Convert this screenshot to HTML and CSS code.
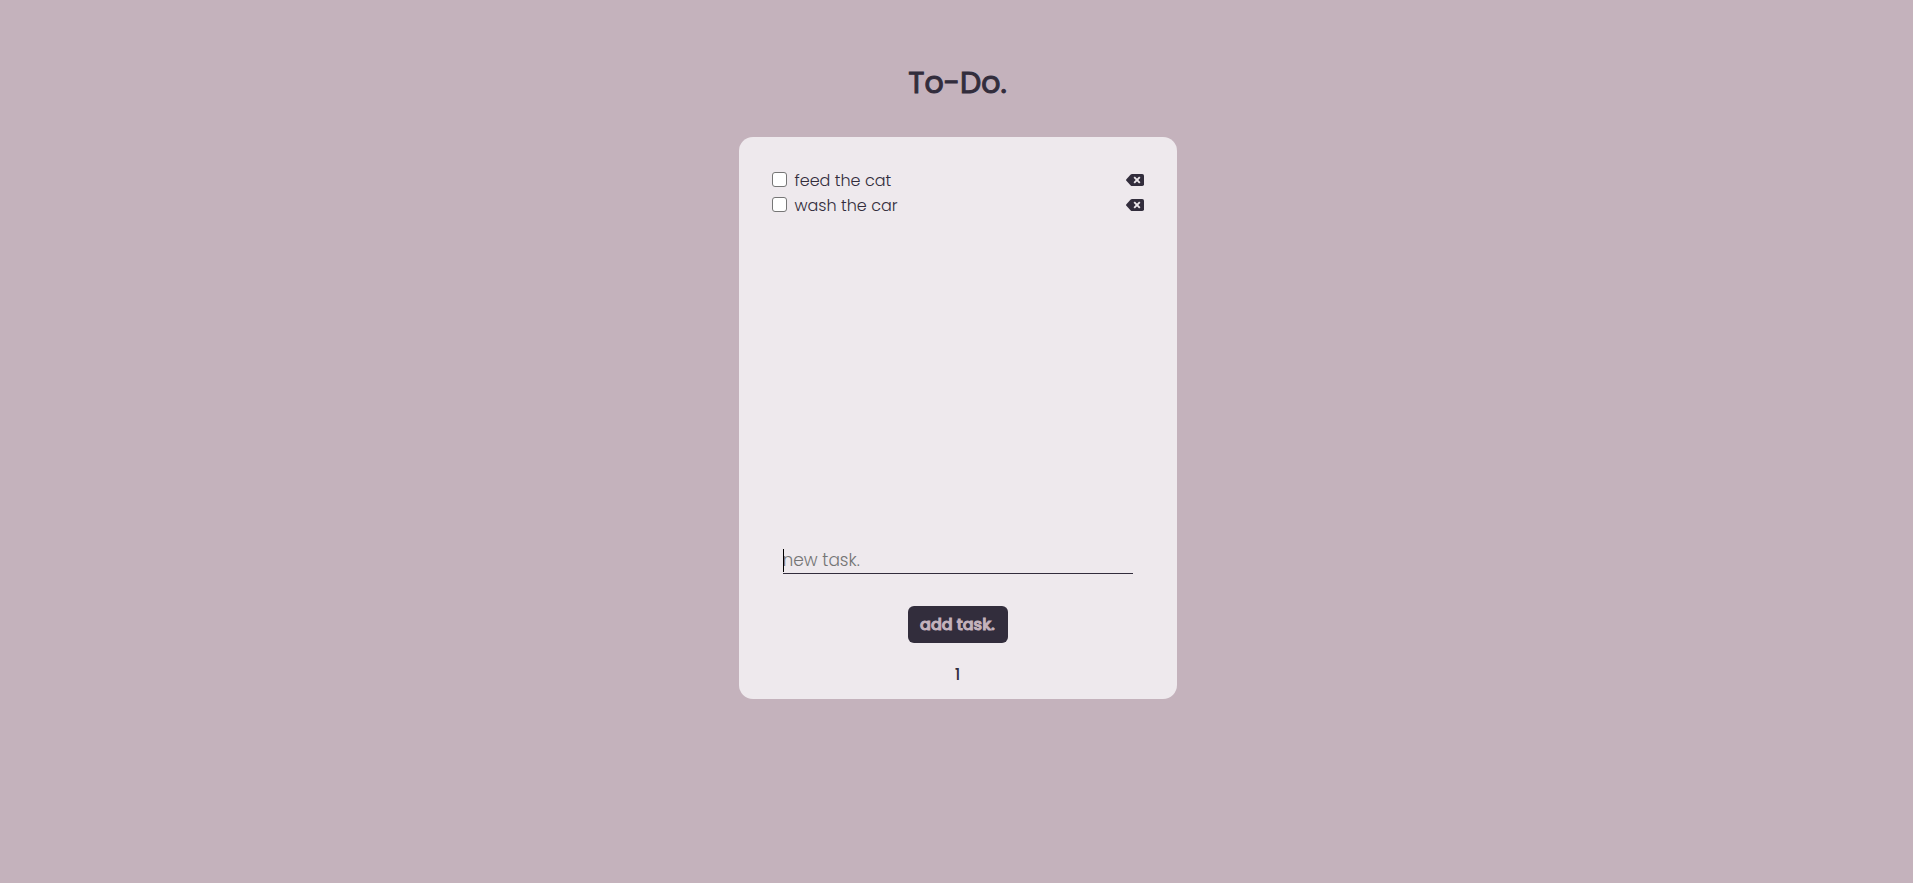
FILE: index.html
```
<!DOCTYPE html>
<html lang="en">
<head>
<meta charset="utf-8">
<meta name="viewport" content="width=device-width, initial-scale=1">
<title>To-Do.</title>
<link rel="stylesheet" href="styles.css">
</head>
<body>
<main class="page">
  <h1 class="title">To-Do.</h1>
  <section class="card">
    <ul class="tasks">
      <li class="task">
        <input class="check" type="checkbox" id="task-1">
        <label class="name" for="task-1">feed the cat</label>
        <button class="remove" type="button" aria-label="Delete feed the cat">
          <svg viewBox="0 0 18 12" width="18" height="12" aria-hidden="true"><path fill="currentColor" d="M6 0H16.200Q18 0 18 1.800V10.200Q18 12 16.200 12H6Q5.300 12 4.700 11.400L.4 6.800Q-.3 6 .4 5.200L4.700.6Q5.300 0 6 0Z"/><path stroke="#eee9ed" stroke-width="1.900" d="M8.200 3.200L13.800 8.800M13.800 3.200L8.200 8.800"/></svg>
        </button>
      </li>
      <li class="task">
        <input class="check" type="checkbox" id="task-2">
        <label class="name" for="task-2">wash the car</label>
        <button class="remove" type="button" aria-label="Delete wash the car">
          <svg viewBox="0 0 18 12" width="18" height="12" aria-hidden="true"><path fill="currentColor" d="M6 0H16.200Q18 0 18 1.800V10.200Q18 12 16.200 12H6Q5.300 12 4.700 11.400L.4 6.800Q-.3 6 .4 5.200L4.700.6Q5.300 0 6 0Z"/><path stroke="#eee9ed" stroke-width="1.900" d="M8.200 3.200L13.800 8.800M13.800 3.200L8.200 8.800"/></svg>
        </button>
      </li>
    </ul>
    <form class="new-task">
      <div class="field">
        <input class="entry" type="text" placeholder="new task." aria-label="New task">
      </div>
      <button class="add" type="button">add task.</button>
    </form>
    <p class="count">1</p>
  </section>
</main>
</body>
</html>
```
FILE: styles.css
```
* {
  box-sizing: border-box;
}

body {
  margin: 0;
  min-height: 100vh;
  background: #c4b2bc;
  color: #322d3c;
  font-family: Poppins, Inter, "Liberation Sans", sans-serif;
  font-size: 16px;
  font-weight: 300;
  line-height: 25px;
}

.page {
  display: flex;
  flex-direction: column;
  align-items: center;
  gap: 32px;
  padding: 60px 16px 32px 18px;
}

.title {
  margin: 0;
  font-size: 30px;
  font-weight: 400;
  line-height: 45px;
  -webkit-text-stroke: 1px currentColor;
}

.card {
  display: flex;
  flex-direction: column;
  align-items: center;
  width: 100%;
  max-width: 438px;
  padding: 30px 33px 12px;
  border-radius: 14px;
  background: #eee9ed;
}

.tasks {
  width: 100%;
  min-height: 376px;
  margin: 0;
  padding: 0;
  list-style: none;
}

.task {
  display: flex;
  align-items: center;
}

.check {
  appearance: none;
  width: 15px;
  height: 15px;
  margin: 0 8px 0 0;
  border: 1px solid #767676;
  border-radius: 3px;
  background: #fff;
}

.check:checked {
  background: #322d3c;
}

.name {
  flex: 1;
  padding-top: 2px;
  line-height: 23px;
}

.remove {
  display: flex;
  padding: 0;
  border: 0;
  background: none;
  color: #322d3c;
  cursor: pointer;
}

.new-task {
  display: flex;
  flex-direction: column;
  align-items: center;
  gap: 32px;
  width: 100%;
  padding: 0 11px;
}

.field {
  position: relative;
  width: 100%;
}

.field::before {
  content: "";
  position: absolute;
  top: 6px;
  left: 0;
  width: 1px;
  height: 23px;
  background: #000;
}

.entry {
  display: block;
  width: 100%;
  height: 31px;
  padding: 5px 0 1px;
  border: 0;
  border-bottom: 1px solid #322d3c;
  outline: 0;
  background: none;
  color: inherit;
  font: inherit;
  font-size: 17px;
}

.entry::placeholder {
  color: #757575;
}

.add {
  min-width: 100px;
  padding: 6px 11px;
  border: 0;
  border-radius: 6px;
  background: #322d3c;
  color: #c4b2bc;
  font: inherit;
  font-weight: 500;
  -webkit-text-stroke: 1px currentColor;
  cursor: pointer;
}

.count {
  margin: 19px 0 0;
  font-weight: 500;
}
```
